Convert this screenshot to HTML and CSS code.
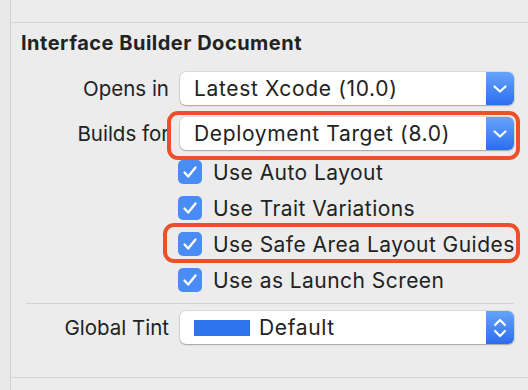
FILE: index.html
```html
<!DOCTYPE html>
<html>
  <head>
    <title>Interface Builder Document</title>
    <link rel="stylesheet" href="styles.css">
  </head>
  <body>
    <div class="page">
      <div class="gutter"></div>
      <div class="panel">
        <div class="panel-top"></div>
        <section class="doc">
          <h2 class="doc-title">Interface Builder Document</h2>

          <div class="field">
            <span class="field-label">Opens in</span>
            <div class="popup">
              <span class="popup-text">Latest Xcode (10.0)</span>
              <span class="popup-arrow">
                <svg width="14" height="8" viewBox="0 0 14 8"><path d="M1.5 1.5 L7 6.5 L12.5 1.5" fill="none" stroke="#fff" stroke-width="2.2" stroke-linecap="round" stroke-linejoin="round"/></svg>
              </span>
            </div>
          </div>

          <div class="field builds">
            <span class="field-label">Builds for</span>
            <div class="popup marked">
              <span class="popup-text">Deployment Target (8.0)</span>
              <span class="popup-arrow">
                <svg width="14" height="8" viewBox="0 0 14 8"><path d="M1.5 1.5 L7 6.5 L12.5 1.5" fill="none" stroke="#fff" stroke-width="2.2" stroke-linecap="round" stroke-linejoin="round"/></svg>
              </span>
            </div>
          </div>

          <div class="checks">
            <label class="check">
              <span class="box"><svg width="16" height="14" viewBox="0 0 16 14"><path d="M2.5 7.5 L6.2 11.5 L13.5 2.5" fill="none" stroke="#fff" stroke-width="2.3" stroke-linecap="round" stroke-linejoin="round"/></svg></span>
              Use Auto Layout
            </label>
            <label class="check">
              <span class="box"><svg width="16" height="14" viewBox="0 0 16 14"><path d="M2.5 7.5 L6.2 11.5 L13.5 2.5" fill="none" stroke="#fff" stroke-width="2.3" stroke-linecap="round" stroke-linejoin="round"/></svg></span>
              Use Trait Variations
            </label>
            <label class="check marked">
              <span class="box"><svg width="16" height="14" viewBox="0 0 16 14"><path d="M2.5 7.5 L6.2 11.5 L13.5 2.5" fill="none" stroke="#fff" stroke-width="2.3" stroke-linecap="round" stroke-linejoin="round"/></svg></span>
              Use Safe Area Layout Guides
            </label>
            <label class="check">
              <span class="box"><svg width="16" height="14" viewBox="0 0 16 14"><path d="M2.5 7.5 L6.2 11.5 L13.5 2.5" fill="none" stroke="#fff" stroke-width="2.3" stroke-linecap="round" stroke-linejoin="round"/></svg></span>
              Use as Launch Screen
            </label>
          </div>

          <hr class="divider">

          <div class="field tint">
            <span class="field-label">Global Tint</span>
            <div class="popup">
              <span class="swatch"></span>
              <span class="popup-text">Default</span>
              <span class="popup-arrow">
                <svg width="14" height="22" viewBox="0 0 14 22"><path d="M2 8 L7 3 L12 8 M2 14 L7 19 L12 14" fill="none" stroke="#fff" stroke-width="2.2" stroke-linecap="round" stroke-linejoin="round"/></svg>
              </span>
            </div>
          </div>
        </section>
        <div class="panel-bottom"></div>
      </div>
    </div>
  </body>
</html>
```

FILE: styles.css
```css
body {
  margin: 0;
  background-color: #ececec;
  font-family: Inter, "Noto Sans", sans-serif;
  color: #222;
}
.page {
  display: flex;
  height: 390px;
  overflow: hidden;
}
.gutter {
  flex: none;
  width: 10px;
  background-color: #e9e9e9;
  border-right: 1px solid #d3d3d3;
}
.panel {
  flex: 1;
  min-width: 0;
}
.panel-top {
  height: 22px;
  border-bottom: 1px solid #d6d6d6;
}
.doc {
  padding: 0 14px 0 10px;
}
.doc-title {
  font-size: 20px;
  font-weight: 700;
  letter-spacing: 0.5px;
  line-height: 24px;
  margin: 8px 0 17px 0;
}
.field {
  display: grid;
  grid-template-columns: 148px minmax(0, 1fr);
  column-gap: 11px;
  align-items: center;
}
.field-label {
  text-align: right;
  font-size: 20.5px;
}
.builds {
  margin-top: 12px;
}
.popup {
  position: relative;
  display: flex;
  align-items: center;
  height: 33px;
  background-color: #fff;
  border-radius: 6px;
  box-shadow: 0 0 0 1px rgba(0, 0, 0, 0.07), 0 1px 1.5px rgba(0, 0, 0, 0.25);
  font-size: 21px;
  letter-spacing: 0.65px;
  white-space: nowrap;
}
.popup-text {
  flex: 1;
  padding-left: 14px;
}
.popup-arrow {
  display: flex;
  align-items: center;
  justify-content: center;
  width: 28px;
  align-self: stretch;
  border-radius: 0 6px 6px 0;
  background: linear-gradient(#66a4fa, #2c6df1);
}
.marked::after {
  content: "";
  position: absolute;
  border: 4px solid #e8522b;
  border-radius: 11px;
}
.popup.marked::after {
  top: -6px;
  left: -13px;
  right: -6px;
  bottom: -10px;
}
.checks {
  margin: 4px 0 0 157px;
}
.check {
  position: relative;
  display: flex;
  align-items: center;
  gap: 11px;
  height: 36px;
  font-size: 21px;
  letter-spacing: 0.45px;
  white-space: nowrap;
}
.check.marked::after {
  top: -3px;
  left: -15px;
  right: -6px;
  bottom: -1px;
}
.box {
  flex: none;
  display: flex;
  align-items: center;
  justify-content: center;
  width: 24px;
  height: 24px;
  border-radius: 5px;
  background-color: #4a8cf5;
}
.divider {
  border: none;
  border-top: 1px solid #d4d4d4;
  margin: 5px 0 0 5px;
}
.tint {
  margin-top: 7px;
}
.swatch {
  width: 56px;
  height: 16px;
  margin-left: 14px;
  background-color: #2f74ef;
}
.tint .popup-text {
  padding-left: 9px;
}
.panel-bottom {
  margin-top: 33px;
  border-top: 1px solid #d6d6d6;
}
```
